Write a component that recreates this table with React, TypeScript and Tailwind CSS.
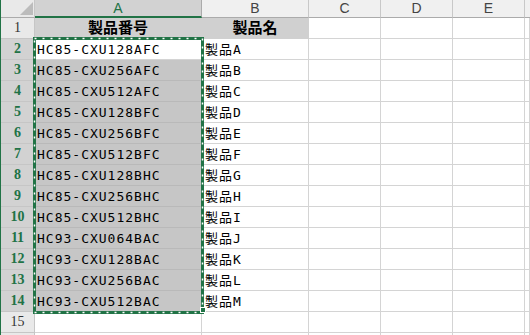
import React from 'react';

const GREEN = '#217346';

const products: [string, string][] = [
  ['HC85-CXU128AFC', '製品A'],
  ['HC85-CXU256AFC', '製品B'],
  ['HC85-CXU512AFC', '製品C'],
  ['HC85-CXU128BFC', '製品D'],
  ['HC85-CXU256BFC', '製品E'],
  ['HC85-CXU512BFC', '製品F'],
  ['HC85-CXU128BHC', '製品G'],
  ['HC85-CXU256BHC', '製品H'],
  ['HC85-CXU512BHC', '製品I'],
  ['HC93-CXU064BAC', '製品J'],
  ['HC93-CXU128BAC', '製品K'],
  ['HC93-CXU256BAC', '製品L'],
  ['HC93-CXU512BAC', '製品M'],
];

const cellFont = "font-['DejaVu_Sans_Mono','Noto_Sans_CJK_JP',monospace] text-[13px] tracking-[1px] text-black";
const colCls = 'grid grid-cols-[34px_167px_107px_72px_72px_72px_1fr]';

function RowHead({ n, selected }: { n?: number; selected?: boolean }) {
  return (
    <div
      className={
        'flex h-[21px] items-end justify-center border-r border-b border-[#c6c6c6] pb-[1px] font-["Liberation_Serif",serif] text-[14px] leading-[18px] ' +
        (selected ? 'bg-[#d2d2d2] font-bold text-[#217346]' : 'bg-[#e9e9e9] text-[#333]')
      }
    >
      {n}
    </div>
  );
}

function Blank() {
  return <div className="h-[21px] border-r border-b border-[#d4d4d4]" />;
}

function ColHead({ label, selected }: { label: string; selected?: boolean }) {
  return (
    <div
      className={
        'flex h-[18px] items-center justify-center font-["Liberation_Sans",sans-serif] text-[14px] ' +
        (selected
          ? 'border-r border-r-[#ababab] border-b-2 border-b-[#217346] bg-[#d2d2d2] text-[#217346]'
          : 'border-r border-b border-r-[#c8c8c8] border-b-[#ababab] bg-[#f0f0f0] text-[#444]')
      }
    >
      {label}
    </div>
  );
}

export default function App() {
  return (
    <div className="relative h-[335px] w-[530px] overflow-hidden border-l border-[#217346] bg-white">
      {/* column headers */}
      <div className={colCls}>
        <div className="relative h-[18px] border-r border-b border-r-[#c6c6c6] border-b-[#ababab] bg-[#e9e9e9]">
          <svg className="absolute inset-0" width="34" height="18" viewBox="0 0 34 18">
            <polygon points="19,15 32,15 32,2" fill="#bcbcbc" />
          </svg>
        </div>
        <ColHead label="A" selected />
        <ColHead label="B" />
        <ColHead label="C" />
        <ColHead label="D" />
        <ColHead label="E" />
        <div className="h-[18px] border-b border-[#ababab] bg-[#f0f0f0]" />
      </div>

      {/* row 1: headings */}
      <div className={colCls}>
        <RowHead n={1} />
        <div className="flex h-[21px] items-end justify-center border-r border-b border-[#d0d0d0] bg-[#d0d0d0] pb-[1px] font-['Noto_Sans_CJK_JP',sans-serif] text-[15px] leading-[20px] font-bold">
          製品番号
        </div>
        <div className="flex h-[21px] items-end justify-center border-r border-b border-[#d0d0d0] bg-[#d0d0d0] pb-[1px] font-['Noto_Sans_CJK_JP',sans-serif] text-[15px] leading-[20px] font-bold">
          製品名
        </div>
        <Blank />
        <Blank />
        <Blank />
        <Blank />
      </div>

      {products.map(([code, name], i) => (
        <div key={code} className={colCls}>
          <RowHead n={i + 2} selected />
          <div
            className={
              'flex h-[21px] items-end border-r border-b pl-[2px] leading-[18px] ' +
              cellFont +
              (i === 0 ? ' border-[#d4d4d4] bg-white' : ' border-[#b9b9b9] bg-[#c6c6c6]')
            }
          >
            {code}
          </div>
          <div className={'flex h-[21px] items-end border-r border-b border-[#d4d4d4] pl-[3px] leading-[18px] ' + cellFont}>
            {name}
          </div>
          <Blank />
          <Blank />
          <Blank />
          <Blank />
        </div>
      ))}

      {/* row 15 and the edge of the next one */}
      {[15, undefined].map((n, k) => (
        <div key={k} className={colCls}>
          <RowHead n={n} />
          <Blank />
          <Blank />
          <Blank />
          <Blank />
          <Blank />
          <Blank />
        </div>
      ))}

      {/* copy marquee around A2:A14 */}
      <svg className="absolute left-[32px] top-[37px]" width="171" height="277" viewBox="0 0 171 277">
        <rect x="1.5" y="1.5" width="168" height="274" fill="none" stroke={GREEN} strokeWidth="3" />
        <rect x="1.5" y="1.5" width="168" height="274" fill="none" stroke="#fff" strokeWidth="1.5" strokeDasharray="2 6" />
      </svg>
      {/* fill handle */}
      <div className="absolute left-[199px] top-[307px] h-[6px] w-[6px] border border-white bg-[#217346]" />
    </div>
  );
}
